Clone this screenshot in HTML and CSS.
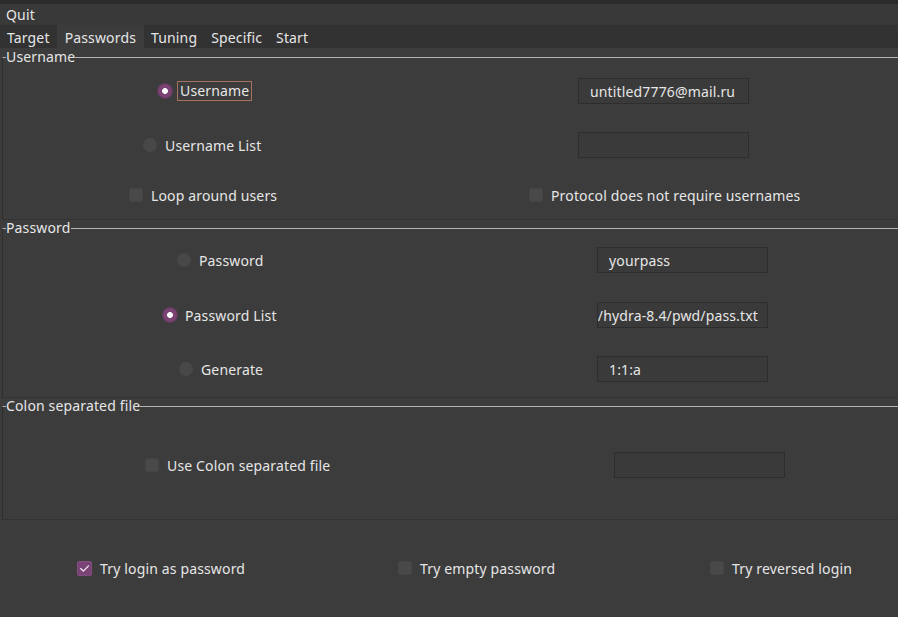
FILE: index.html
```html
<!DOCTYPE html>
<html>
<head>
<meta charset="utf-8">
<link rel="stylesheet" href="styles.css">
</head>
<body>
<div class="topstrip"></div>
<div class="menubar"><span class="menu-item">Quit</span></div>
<div class="tabs">
  <span class="tab first">Target</span>
  <span class="tab active">Passwords</span>
  <span class="tab">Tuning</span>
  <span class="tab">Specific</span>
  <span class="tab">Start</span>
</div>

<fieldset class="frame frame-user">
  <legend>Username</legend>
  <div class="row r-u1 split-578">
    <label class="opt in-158"><span class="radio on"></span><span class="focus">Username</span></label>
    <div class="field">untitled7776@mail.ru</div>
  </div>
  <div class="row r-u2 split-578">
    <label class="opt in-143"><span class="radio"></span><span>Username List</span></label>
    <div class="field"></div>
  </div>
  <div class="row r-u3 split-529">
    <label class="opt in-129"><span class="check"></span><span>Loop around users</span></label>
    <label class="opt"><span class="check"></span><span>Protocol does not require usernames</span></label>
  </div>
</fieldset>

<fieldset class="frame frame-pass">
  <legend>Password</legend>
  <div class="row r-p1 split-597">
    <label class="opt in-177"><span class="radio"></span><span>Password</span></label>
    <div class="field">yourpass</div>
  </div>
  <div class="row r-p2 split-597">
    <label class="opt in-163"><span class="radio on"></span><span>Password List</span></label>
    <div class="field scrolled"><span>/hydra-8.4/pwd/pass.txt</span></div>
  </div>
  <div class="row r-p3 split-597">
    <label class="opt in-179"><span class="radio"></span><span>Generate</span></label>
    <div class="field">1:1:a</div>
  </div>
</fieldset>

<fieldset class="frame frame-colon">
  <legend>Colon separated file</legend>
  <div class="row r-c1 split-614">
    <label class="opt in-145"><span class="check"></span><span>Use Colon separated file</span></label>
    <div class="field"></div>
  </div>
</fieldset>

<div class="row bottom-row">
  <label class="opt"><span class="check on"><svg viewBox="0 0 15 15" width="15" height="15"><path d="M3.6 7.6 L6.4 10.1 L11.5 4.9" fill="none" stroke="#f2e6f0" stroke-width="1.3" stroke-linecap="round" stroke-linejoin="round"/></svg></span><span>Try login as password</span></label>
  <label class="opt"><span class="check"></span><span>Try empty password</span></label>
  <label class="opt"><span class="check"></span><span>Try reversed login</span></label>
</div>
</body>
</html>
```

FILE: styles.css
```css
html, body {
  margin: 0;
  padding: 0;
}
body {
  width: 898px;
  height: 617px;
  overflow: hidden;
  background: #3c3c3c;
  color: #e6e6e6;
  font-family: "Noto Sans", "DejaVu Sans", sans-serif;
  font-size: 14px;
  letter-spacing: 0.15px;
}
.topstrip {
  height: 4px;
  background: #2b2b2b;
}
.menubar {
  height: 21px;
  background: #393939;
  display: flex;
  align-items: center;
}
.menu-item {
  padding-left: 6px;
}
.tabs {
  height: 23px;
  background: #323232;
  display: flex;
  align-items: stretch;
}
.tab {
  display: flex;
  align-items: center;
  padding: 1px 7px 0 7px;
}
.tab.active {
  background: #3c3c3c;
  padding: 1px 8px 0 8px;
}

.frame {
  margin: 1px -20px 0 2px;
  padding: 0;
  min-width: 0;
  border-style: solid;
  border-width: 1px;
  border-top-color: #b4b4b4;
  border-left-color: #2e2e2e;
  border-bottom-color: #333333;
  border-right-color: #333333;
}
.frame + .frame {
  margin-top: 0;
}
.frame legend {
  padding: 0;
  margin-left: 3px;
  line-height: 16px;
  height: 16px;
}

.row {
  display: grid;
  align-items: center;
  height: 26px;
}
/* frame content starts at x = 3 */
.split-578 { grid-template-columns: 575px auto; }
.split-529 { grid-template-columns: 526px auto; }
.split-597 { grid-template-columns: 594px auto; }
.split-614 { grid-template-columns: 611px auto; }
.bottom-row {
  grid-template-columns: 321px 312px auto;
  padding-left: 77px;
  margin-top: 35px;
}

.in-158 { padding-left: 155px; }
.in-143 { padding-left: 140px; }
.in-129 { padding-left: 126px; }
.in-177 { padding-left: 174px; }
.in-163 { padding-left: 160px; }
.in-179 { padding-left: 176px; }
.in-145 { padding-left: 142px; }

.frame-user { padding-bottom: 11px; }
.r-u1 { margin-top: 13px; }
.r-u2 { margin-top: 28px; }
.r-u3 { margin-top: 24px; }

.frame-pass { padding-bottom: 15px; }
.r-p1 { margin-top: 11px; }
.r-p2 { margin-top: 29px; }
.r-p3 { margin-top: 28px; }

.frame-colon { padding-bottom: 41px; }
.r-c1 { margin-top: 38px; }

.opt {
  display: flex;
  align-items: center;
  gap: 8px;
  white-space: nowrap;
}
.radio {
  width: 14px;
  height: 14px;
  border-radius: 50%;
  background: #484848;
  flex: none;
}
.radio.on {
  background: radial-gradient(circle, #ffffff 0 2.6px, #7b4374 3.2px);
  box-shadow: 0 0 0 1px #5e3a59;
}
.check {
  width: 14px;
  height: 14px;
  border-radius: 2px;
  background: #494949;
  border: 1px solid #444444;
  box-sizing: border-box;
  flex: none;
  display: flex;
}
.check.on {
  width: 15px;
  height: 15px;
  background: #7a4376;
  border-color: #834c7f;
}
.check.on svg {
  margin: -1px;
}
.focus {
  border: 1px solid #a7735f;
  padding: 0 2px;
  margin-left: -3px;
  line-height: 18px;
}

.field {
  width: 171px;
  height: 26px;
  box-sizing: border-box;
  background: #3a3a3a;
  border: 1px solid #2d2d2d;
  display: flex;
  align-items: center;
  padding-left: 11px;
  white-space: nowrap;
  overflow: hidden;
}
.field.scrolled {
  justify-content: flex-end;
  padding-left: 0;
  padding-right: 9px;
}
```
